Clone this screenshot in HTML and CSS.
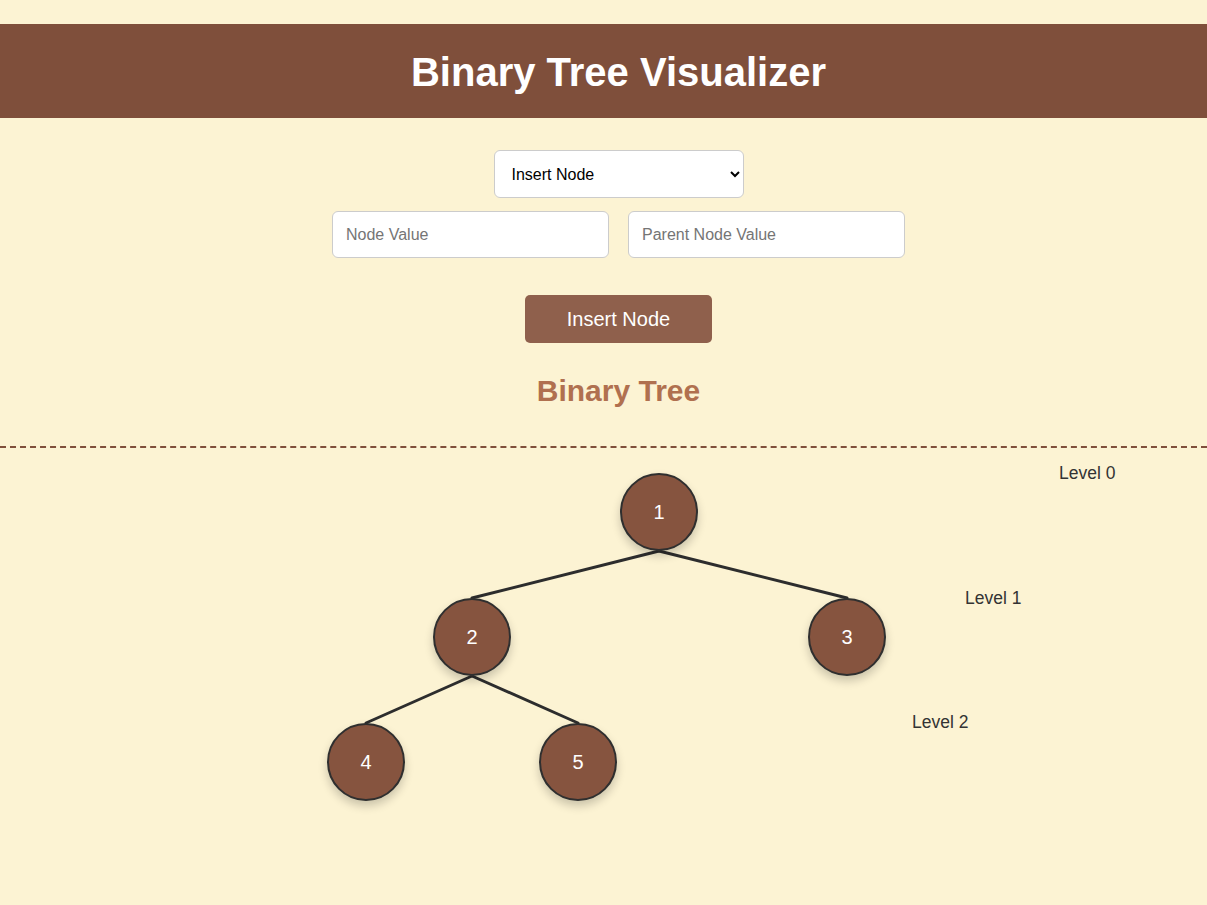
FILE: index.html
```html
<!DOCTYPE html>
<html lang="en">
<head>
<meta charset="utf-8">
<title>Binary Tree Visualizer</title>
<link rel="stylesheet" href="styles.css">
</head>
<body>
<header class="site-header">
  <h1 class="site-title">Binary Tree Visualizer</h1>
</header>
<main class="controls">
  <select class="op-select">
    <option>Insert Node</option>
    <option>Delete Node</option>
    <option>Search Node</option>
  </select>
  <div class="input-row">
    <input class="text-input" type="text" placeholder="Node Value">
    <input class="text-input" type="text" placeholder="Parent Node Value">
  </div>
  <button class="action-btn" type="button">Insert Node</button>
  <h2 class="tree-title">Binary Tree</h2>
</main>
<section class="tree-canvas">
  <svg class="edges" width="1207" height="420" viewBox="0 0 1207 420">
    <line x1="659" y1="103" x2="472" y2="150"/>
    <line x1="659" y1="103" x2="847" y2="150"/>
    <line x1="472" y1="228" x2="366" y2="275"/>
    <line x1="472" y1="228" x2="578" y2="275"/>
  </svg>
  <div class="node" style="left:620px;top:25px">1</div>
  <div class="node" style="left:433px;top:150px">2</div>
  <div class="node" style="left:808px;top:150px">3</div>
  <div class="node" style="left:327px;top:275px">4</div>
  <div class="node" style="left:539px;top:275px">5</div>
  <div class="level" style="left:1059px;top:15px">Level 0</div>
  <div class="level" style="left:965px;top:140px">Level 1</div>
  <div class="level" style="left:912px;top:264px">Level 2</div>
</section>
</body>
</html>
```
FILE: styles.css
```css
* { box-sizing: border-box; }

html, body {
  margin: 0;
  padding: 0;
  background: #fcf3d3;
  font-family: "Liberation Sans", Arial, sans-serif;
  color: #333;
}

.site-header {
  margin-top: 24px;
  height: 94px;
  background: #7f4f3b;
  padding-left: 30px;
  display: flex;
  align-items: center;
  justify-content: center;
}

.site-title {
  margin: 0;
  font-size: 40px;
  line-height: 46px;
  font-weight: bold;
  color: #ffffff;
  padding-top: 2px;
}

.controls {
  padding-left: 30px;
  display: flex;
  flex-direction: column;
  align-items: center;
  padding-top: 32px;
}

.op-select {
  width: 250px;
  height: 48px;
  border: 1px solid #ccc;
  border-radius: 6px;
  background: #fff;
  font-family: "Liberation Sans", Arial, sans-serif;
  font-size: 16px;
  color: #000;
  padding: 0 10px 0 13px;
}

.input-row {
  display: flex;
  gap: 19px;
  margin-top: 13px;
}

.text-input {
  width: 277px;
  height: 47px;
  border: 1px solid #ccc;
  border-radius: 6px;
  background: #fff;
  padding: 0 13px;
  font-family: "Liberation Sans", Arial, sans-serif;
  font-size: 16px;
  color: #333;
}

.text-input::placeholder {
  color: #757575;
}

.action-btn {
  margin-top: 37px;
  height: 48px;
  width: 187px;
  border: none;
  border-radius: 5px;
  background: #8f604c;
  color: #fff;
  font-family: "Liberation Sans", Arial, sans-serif;
  font-size: 20px;
  padding: 0;
}

.tree-title {
  margin: 31px 0 0;
  height: 72px;
  font-size: 30px;
  line-height: 33px;
  font-weight: bold;
  color: #b0704f;
}

.tree-canvas {
  position: relative;
  border-top: 2px dashed #7f4f3b;
  height: 458px;
}

.edges {
  position: absolute;
  left: 0;
  top: 0;
}

.edges line {
  stroke: #2d2d2d;
  stroke-width: 3;
  stroke-linecap: round;
}

.node {
  position: absolute;
  width: 78px;
  height: 78px;
  border-radius: 50%;
  border: 2px solid #2f2f2f;
  background: #86543f;
  color: #fff;
  font-size: 20px;
  display: flex;
  align-items: center;
  justify-content: center;
  box-shadow: 0 5px 10px rgba(0, 0, 0, 0.2);
}

.level {
  position: absolute;
  font-size: 17.5px;
  line-height: 20px;
  color: #333;
}
```
